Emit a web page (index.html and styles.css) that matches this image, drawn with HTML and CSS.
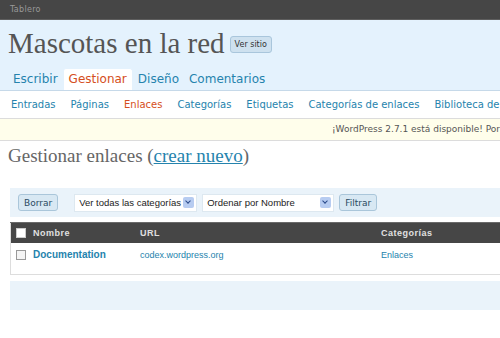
FILE: index.html
```html
<!DOCTYPE html>
<html lang="es">
<head>
    <meta charset="UTF-8">
    <title>Gestionar enlaces ‹ Mascotas en la red</title>
    <link rel="stylesheet" href="styles.css">
</head>
<body>

    <div id="user-info">Tablero</div>

    <div id="wphead">
        <h1>Mascotas en la red <span class="visit-site">Ver sitio</span></h1>
        <ul id="adminmenu">
            <li><a href="#">Escribir</a></li>
            <li class="current"><a href="#">Gestionar</a></li>
            <li><a href="#">Diseño</a></li>
            <li><a href="#">Comentarios</a></li>
        </ul>
    </div>

    <ul id="submenu">
        <li><a href="#">Entradas</a></li>
        <li><a href="#">Páginas</a></li>
        <li class="current"><a href="#">Enlaces</a></li>
        <li><a href="#">Categorías</a></li>
        <li><a href="#">Etiquetas</a></li>
        <li><a href="#">Categorías de enlaces</a></li>
        <li><a href="#">Biblioteca de medios</a></li>
    </ul>

    <div id="update-nag">¡WordPress 2.7.1 está disponible! Por favor, actualiza ahora.</div>

    <div class="wrap">
        <h2>Gestionar enlaces (<a href="#">crear nuevo</a>)</h2>

        <div class="tablenav">
            <button class="button">Borrar</button>
            <div class="select cat">Ver todas las categorías<span class="arrow"></span></div>
            <div class="select order">Ordenar por Nombre<span class="arrow"></span></div>
            <button class="button">Filtrar</button>
        </div>

        <table class="widefat">
            <thead>
                <tr>
                    <th class="check"><span class="box"></span></th>
                    <th class="col-name">Nombre</th>
                    <th class="col-url">URL</th>
                    <th>Categorías</th>
                </tr>
            </thead>
            <tbody>
                <tr>
                    <td class="check"><span class="box"></span></td>
                    <td class="col-name"><a href="#" class="row-title">Documentation</a></td>
                    <td class="col-url"><a href="#">codex.wordpress.org</a></td>
                    <td><a href="#">Enlaces</a></td>
                </tr>
            </tbody>
        </table>

        <div class="tablenav bottom"></div>
    </div>

</body>
</html>
```

FILE: styles.css
```css
body {
    margin: 0;
    font-family: 'DejaVu Sans', 'Liberation Sans', sans-serif;
    font-size: 11px;
    color: #333;
    background: #fff;
    width: 500px;
    overflow: hidden;
    white-space: nowrap;
}
a {
    color: #2583ad;
    text-decoration: none;
}
ul {
    list-style: none;
    margin: 0;
    padding: 0;
}

#user-info {
    height: 19px;
    line-height: 19px;
    padding-left: 10px;
    background: #464646;
    border-bottom: 1px solid #5e5e5e;
    color: #999;
    font-size: 8px;
    letter-spacing: 0.3px;
}

#wphead {
    background: #e4f2fd;
    border-bottom: 1px solid #c6d9e9;
    padding: 0 8px;
}
#wphead h1 {
    margin: 0 0 5px;
    padding-top: 3px;
    height: 40px;
    font-family: 'Liberation Serif', Georgia, serif;
    font-weight: normal;
    font-size: 29px;
    color: #555;
    display: flex;
    align-items: center;
}
.visit-site {
    font-family: 'DejaVu Sans', sans-serif;
    font-size: 8px;
    color: #333;
    background: #cee1ef;
    border: 1px solid #a9c6dc;
    border-radius: 3px;
    padding: 3px 4px;
    margin: 3px 0 0 5px;
}

#adminmenu {
    display: flex;
    height: 22px;
}
#adminmenu li a {
    display: block;
    font-size: 12px;
    line-height: 22px;
    padding: 0 5px;
    color: #2583ad;
}
#adminmenu li.current a {
    background: #fff;
    color: #d54e21;
    border-radius: 3px 3px 0 0;
    border: 1px solid #e4f2fd;
    border-bottom: none;
    line-height: 21px;
}

#submenu {
    display: flex;
    height: 27px;
    align-items: center;
    padding-left: 3.5px;
}
#submenu li a {
    display: block;
    padding: 0 7.5px;
    font-size: 10px;
}
#submenu li.current a {
    color: #d54e21;
}

#update-nag {
    background: #fffeeb;
    border-top: 1px solid #dcdcdc;
    border-bottom: 1px solid #dcdcdc;
    height: 21px;
    line-height: 21px;
    padding-left: 332px;
    font-size: 9px;
    color: #555;
}

.wrap {
    padding-left: 10px;
}
.wrap h2 {
    margin: 0 0 0 -2px;
    padding-top: 4px;
    height: 43px;
    font-family: 'Liberation Serif', Georgia, serif;
    font-weight: normal;
    font-size: 19px;
    color: #666;
}
.wrap h2 a {
    text-decoration: underline;
}

.tablenav {
    background: #eaf3fa;
    height: 29px;
    display: flex;
    align-items: center;
    padding-left: 8px;
    gap: 5px;
}
.button {
    font-family: 'DejaVu Sans', sans-serif;
    font-size: 9px;
    color: #2a4a5f;
    background: #d8e8f3;
    border: 1px solid #aac6da;
    border-radius: 3px;
    height: 17px;
    padding: 0 5px;
}
.select {
    background: #fff;
    border: 1px solid #dde8f0;
    height: 16px;
    line-height: 16px;
    font-family: 'Liberation Sans', sans-serif;
    font-size: 9.5px;
    color: #222;
    padding-left: 4px;
    display: flex;
    justify-content: space-between;
    align-items: center;
}
.select.cat {
    width: 117px;
    margin-left: 11px;
}
.select.order {
    width: 126px;
}
.arrow {
    width: 11px;
    height: 11px;
    margin-right: 2px;
    background: #b7ccf1;
    border-radius: 2px;
    position: relative;
}
.arrow::after {
    content: '';
    position: absolute;
    left: 3px;
    top: 2px;
    width: 3px;
    height: 3px;
    border-right: 1.5px solid #2a4a8a;
    border-bottom: 1.5px solid #2a4a8a;
    transform: rotate(45deg);
}

.widefat {
    margin-top: 5px;
    width: 490px;
    border-collapse: collapse;
    border-left: 1px solid #ddd;
    font-family: 'Liberation Sans', sans-serif;
}
.widefat th {
    background: #464646;
    color: #e0e0e0;
    font-size: 9px;
    font-weight: bold;
    letter-spacing: 0.5px;
    text-align: left;
    height: 20px;
    padding: 0;
    border-top: 1px solid #6a6a6a;
}
.widefat td {
    height: 31px;
    padding: 0;
    line-height: 24px;
    font-size: 9px;
    vertical-align: top;
    border-bottom: 1px solid #ddd;
}
.widefat .check {
    width: 17px;
    padding-left: 5px;
}
.widefat td.check .box {
    margin-top: 7px;
}
.widefat .col-name {
    width: 107px;
}
.widefat .col-url {
    width: 241px;
}
.box {
    display: block;
    width: 8px;
    height: 8px;
    border: 1px solid #999;
    background: #f4f4f4;
}
th .box {
    background: #fff;
    border-color: #ccc;
}
.row-title {
    font-weight: bold;
    font-size: 10px;
}

.tablenav.bottom {
    margin-top: 6px;
}
```
